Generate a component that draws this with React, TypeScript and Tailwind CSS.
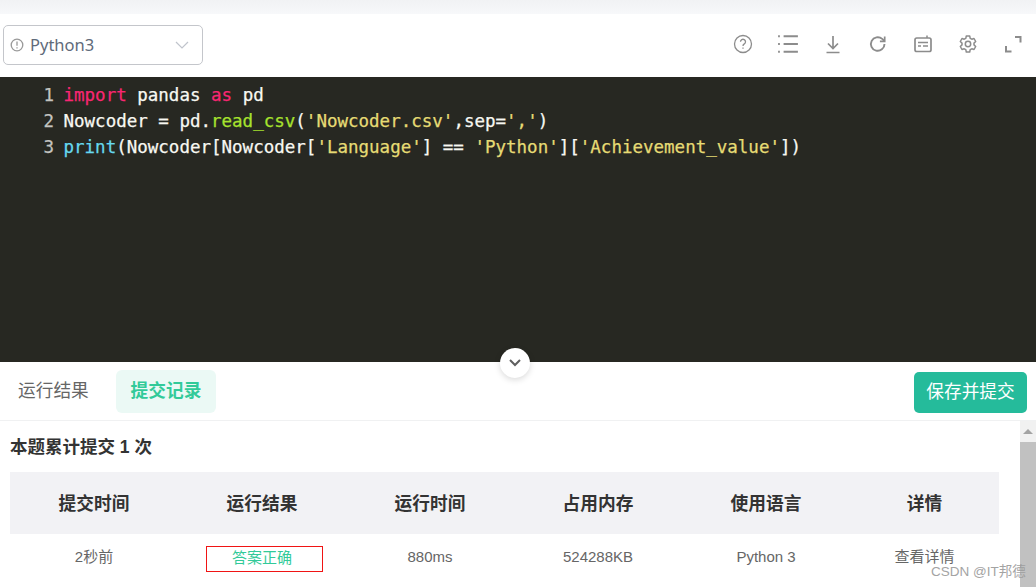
import React from "react";

const Ic = ({ children, w = 20 }: { children: React.ReactNode; w?: number }) => (
  <div className="w-[45px] flex justify-center">
    <svg width={w} height={w} viewBox="0 0 20 20" fill="none" stroke="#8c8c8c" strokeWidth="1.5">
      {children}
    </svg>
  </div>
);

const K = ({ c, children }: { c: string; children: React.ReactNode }) => <span className={c}>{children}</span>;

const cols = ["提交时间", "运行结果", "运行时间", "占用内存", "使用语言", "详情"];

export default function App() {
  return (
    <div className="relative w-[1036px] h-[587px] overflow-hidden bg-white font-['Liberation_Sans','Noto_Sans_CJK_SC',sans-serif]">
      <div className="h-[14px] bg-gradient-to-b from-[#f1f2f4] to-[#f7f8fa]" />
      <div className="h-[63px] flex items-center pl-[3px] pr-px">
        <div className="mb-[2px] w-[200px] h-[40px] border border-[#c4c6cb] rounded-[5px] flex items-center pl-[6px] pr-[13px] text-[#5f6b7a] text-[16.5px] font-['Noto_Sans',sans-serif]">
          <svg width="14" height="14" viewBox="0 0 14 14" fill="none" stroke="#999" strokeWidth="1.3">
            <circle cx="7" cy="7" r="5.8" />
            <path d="M7 3.6v4.2M7 9.3v1.2" />
          </svg>
          <span className="ml-[6px] flex-1 pt-px">Python3</span>
          <svg width="14" height="8" viewBox="0 0 14 8" fill="none" stroke="#c0c4cc" strokeWidth="1.2">
            <path d="M1 1l6 6 6-6" />
          </svg>
        </div>
        <div className="ml-auto mb-[3px] flex items-center">
          <Ic>
            <circle cx="10" cy="10" r="8.5" strokeWidth="1.3" />
            <path d="M7.500 7.800a2.500 2.500 0 1 1 3.800 2.100c-.9.5-1.300 1-1.300 2M10 13.600v1.200" strokeWidth="1.300" />
          </Ic>
          <Ic w={22}>
            <path d="M6 3h13M6 10h13M6 17h13" strokeWidth="1.700" />
            <path d="M1 3h1.600M1 10h1.600M1 17h1.600" strokeWidth="1.800" />
          </Ic>
          <Ic>
            <path d="M10 2v12M5 9.500l5 5 5-5M3.500 18.500h13" strokeWidth="1.700" />
          </Ic>
          <Ic>
            <path d="M16.500 10a6.800 6.800 0 1 1-2.300-5.100L16.500 7" strokeWidth="1.900" />
            <path d="M16.700 2.500v4.800h-4.800" strokeWidth="1.700" />
          </Ic>
          <Ic>
            <rect x="2" y="4" width="16" height="13.500" rx="1.800" strokeWidth="1.700" />
            <path d="M14 1.500V4M5 8.500h10M5 12h3M10 12h5" />
          </Ic>
          <Ic>
            <path d="M8.300 2h3.400l.5 2.300 1.600.9 2.200-.7 1.700 3-1.700 1.600v1.800l1.700 1.600-1.700 3-2.200-.7-1.600.9-.5 2.300H8.300l-.5-2.300-1.600-.9-2.200.7-1.700-3 1.700-1.600V9.100L2.300 7.500l1.700-3 2.200.7 1.600-.9z" strokeWidth="1.500" strokeLinejoin="round" />
            <circle cx="10" cy="10" r="2.700" strokeWidth="1.500" />
          </Ic>
          <Ic>
            <path d="M12 3h5.500v5.500M3 12v5.500h5.500" strokeWidth="2" />
          </Ic>
        </div>
      </div>

      <div className="h-[285px] bg-[#272822] font-['DejaVu_Sans_Mono',monospace] text-[17.5px] leading-[26px] text-[#f8f8f2] pt-[5px] whitespace-pre [-webkit-text-stroke:0.25px]">
        <div className="flex">
          <span className="w-[54px] text-right text-[#c4c4c0]">1</span>
          <span className="ml-[9.5px]">
            <K c="text-[#f92672]">import</K> pandas <K c="text-[#f92672]">as</K> pd
          </span>
        </div>
        <div className="flex">
          <span className="w-[54px] text-right text-[#c4c4c0]">2</span>
          <span className="ml-[9.5px]">
            Nowcoder = pd.<K c="text-[#a6e22e]">read_csv</K>(<K c="text-[#e6db74]">'Nowcoder.csv'</K>,sep=<K c="text-[#e6db74]">','</K>)
          </span>
        </div>
        <div className="flex">
          <span className="w-[54px] text-right text-[#c4c4c0]">3</span>
          <span className="ml-[9.5px]">
            <K c="text-[#66d9ef]">print</K>(Nowcoder[Nowcoder[<K c="text-[#e6db74]">'Language'</K>] == <K c="text-[#e6db74]">'Python'</K>][<K c="text-[#e6db74]">'Achievement_value'</K>])
          </span>
        </div>
      </div>

      <div className="absolute left-[500px] top-[348px] w-[30px] h-[30px] rounded-full bg-white shadow-[0_2px_6px_rgba(0,0,0,0.15)] flex items-center justify-center">
        <svg width="12" height="8" viewBox="0 0 12 8" fill="none" stroke="#5f5f5f" strokeWidth="2">
          <path d="M1 1l5 5 5-5" />
        </svg>
      </div>

      <div className="h-[59px] border-b border-[#f0f1f2] flex items-start pt-[8px] pl-[18px] pr-[9px]">
        <div className="h-[43px] w-[71px] flex items-center text-[17.7px] text-[#666] whitespace-nowrap">运行结果</div>
        <div className="ml-[27px] w-[100px] h-[43px] rounded-[6px] bg-[#ebf9f5] flex items-center justify-center text-[17.7px] font-bold text-[#32ca99]">
          提交记录
        </div>
        <div className="ml-auto mt-[2px] w-[113px] h-[41px] rounded-[5px] bg-[#25bb9b] flex items-center justify-center text-[17.7px] text-white">
          保存并提交
        </div>
      </div>

      <div className="flex h-[166px]">
        <div className="w-[1020px] pl-[10px] pr-[21px]">
          <div className="h-[51px] pt-[14px] text-[17.5px] leading-[24px] font-bold text-[#333]">本题累计提交 1 次</div>
          <div className="grid grid-cols-[168px_168px_168px_168px_168px_149px] h-[62px] pt-[2px] bg-[#f2f2f5] items-center text-center text-[17.7px] font-bold text-[#333]">
            {cols.map((c) => (
              <div key={c}>{c}</div>
            ))}
          </div>
          <div className="grid grid-cols-[168px_168px_168px_168px_168px_149px] items-start text-center text-[15px] leading-[22px] text-[#666] pt-[12px]">
            <div>2秒前</div>
            <div className="flex justify-center pl-[4px]">
              <span className="w-[117px] h-[26px] border border-[#f01414] text-[#32ca99] flex items-center justify-center pb-[3px] pr-[4px]">答案正确</span>
            </div>
            <div>880ms</div>
            <div>524288KB</div>
            <div>Python 3</div>
            <div>查看详情</div>
          </div>
        </div>
        <div className="w-[16px] bg-[#f1f1f1] flex flex-col">
          <div className="h-[21px] flex items-center justify-center">
            <div className="w-0 h-0 border-l-[5px] border-r-[5px] border-b-[5px] border-l-transparent border-r-transparent border-b-[#a3a3a3]" />
          </div>
          <div className="flex-1 bg-[#c1c1c1]" />
        </div>
      </div>

      <div className="absolute left-[931px] top-[563px] text-[13.5px] leading-[18px] text-[#9a9a9a] opacity-90">CSDN @IT邦德</div>
    </div>
  );
}
